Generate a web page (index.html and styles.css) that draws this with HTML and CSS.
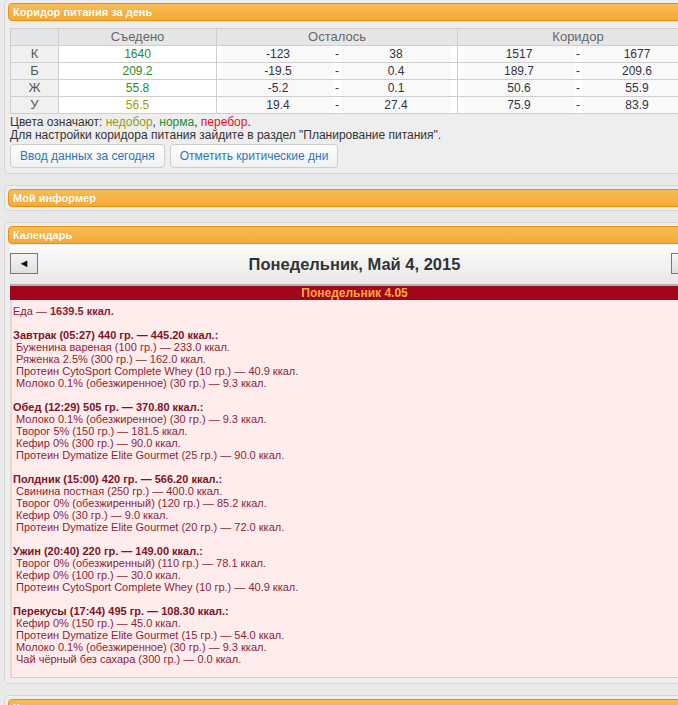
FILE: index.html
```html
<!DOCTYPE html>
<html lang="ru">
<head>
  <meta charset="UTF-8">
  <title>Дневник питания</title>
  <link rel="stylesheet" href="styles.css">
</head>
<body>
<div class="page">

  <div class="widget">
    <div class="widget-head">Коридор питания за день</div>
    <div class="widget-body">
      <table class="corridor">
        <tr>
          <th class="col-lbl"></th>
          <th class="col-eaten">Съедено</th>
          <th class="col-left">Осталось</th>
          <th>Коридор</th>
        </tr>
        <tr>
          <td class="lbl">К</td>
          <td class="norm">1640</td>
          <td><div class="range"><span>-123</span><i>-</i><span>38</span></div></td>
          <td><div class="range"><span>1517</span><i>-</i><span>1677</span></div></td>
        </tr>
        <tr>
          <td class="lbl">Б</td>
          <td class="norm">209.2</td>
          <td><div class="range"><span>-19.5</span><i>-</i><span>0.4</span></div></td>
          <td><div class="range"><span>189.7</span><i>-</i><span>209.6</span></div></td>
        </tr>
        <tr>
          <td class="lbl">Ж</td>
          <td class="norm">55.8</td>
          <td><div class="range"><span>-5.2</span><i>-</i><span>0.1</span></div></td>
          <td><div class="range"><span>50.6</span><i>-</i><span>55.9</span></div></td>
        </tr>
        <tr>
          <td class="lbl">У</td>
          <td class="under">56.5</td>
          <td><div class="range"><span>19.4</span><i>-</i><span>27.4</span></div></td>
          <td><div class="range"><span>75.9</span><i>-</i><span>83.9</span></div></td>
        </tr>
      </table>
      <p class="legend">Цвета означают: <span class="under">недобор</span>, <span class="norm">норма</span>, <span class="over">перебор</span>.<br>
      Для настройки коридора питания зайдите в раздел "Планирование питания".</p>
      <div class="actions">
        <button class="btn">Ввод данных за сегодня</button>
        <button class="btn">Отметить критические дни</button>
      </div>
    </div>
  </div>

  <div class="widget">
    <div class="widget-head">Мой информер</div>
  </div>

  <div class="widget">
    <div class="widget-head">Календарь</div>
    <div class="calendar">
      <div class="cal-nav">
        <button class="nav-btn">&#9668;</button>
        <div class="cal-title">Понедельник, Май 4, 2015</div>
        <button class="nav-btn"></button>
      </div>
      <div class="day-bar">Понедельник 4.05</div>
      <div class="day-log">
        <p>Еда — <b>1639.5 ккал.</b></p>

        <div class="meal">
          <p class="meal-title">Завтрак (05:27) 440 гр. — 445.20 ккал.:</p>
          <p class="item">Буженина вареная (100 гр.) — 233.0 ккал.</p>
          <p class="item">Ряженка 2.5% (300 гр.) — 162.0 ккал.</p>
          <p class="item">Протеин CytoSport Complete Whey (10 гр.) — 40.9 ккал.</p>
          <p class="item">Молоко 0.1% (обезжиренное) (30 гр.) — 9.3 ккал.</p>
        </div>

        <div class="meal">
          <p class="meal-title">Обед (12:29) 505 гр. — 370.80 ккал.:</p>
          <p class="item">Молоко 0.1% (обезжиренное) (30 гр.) — 9.3 ккал.</p>
          <p class="item">Творог 5% (150 гр.) — 181.5 ккал.</p>
          <p class="item">Кефир 0% (300 гр.) — 90.0 ккал.</p>
          <p class="item">Протеин Dymatize Elite Gourmet (25 гр.) — 90.0 ккал.</p>
        </div>

        <div class="meal">
          <p class="meal-title">Полдник (15:00) 420 гр. — 566.20 ккал.:</p>
          <p class="item">Свинина постная (250 гр.) — 400.0 ккал.</p>
          <p class="item">Творог 0% (обезжиренный) (120 гр.) — 85.2 ккал.</p>
          <p class="item">Кефир 0% (30 гр.) — 9.0 ккал.</p>
          <p class="item">Протеин Dymatize Elite Gourmet (20 гр.) — 72.0 ккал.</p>
        </div>

        <div class="meal">
          <p class="meal-title">Ужин (20:40) 220 гр. — 149.00 ккал.:</p>
          <p class="item">Творог 0% (обезжиренный) (110 гр.) — 78.1 ккал.</p>
          <p class="item">Кефир 0% (100 гр.) — 30.0 ккал.</p>
          <p class="item">Протеин CytoSport Complete Whey (10 гр.) — 40.9 ккал.</p>
        </div>

        <div class="meal">
          <p class="meal-title">Перекусы (17:44) 495 гр. — 108.30 ккал.:</p>
          <p class="item">Кефир 0% (150 гр.) — 45.0 ккал.</p>
          <p class="item">Протеин Dymatize Elite Gourmet (15 гр.) — 54.0 ккал.</p>
          <p class="item">Молоко 0.1% (обезжиренное) (30 гр.) — 9.3 ккал.</p>
          <p class="item">Чай чёрный без сахара (300 гр.) — 0.0 ккал.</p>
        </div>
      </div>
    </div>
  </div>

  <div class="widget">
    <div class="widget-head">Кнопки</div>
  </div>

</div>
</body>
</html>
```

FILE: styles.css
```css
html, body {
  margin: 0;
  overflow: hidden;
}
body {
  background: #e9e9e9;
  font-family: "Liberation Sans", Arial, sans-serif;
  font-size: 12px;
  color: #333;
}
.page {
  width: 701px;
  margin-top: -1px;
  padding-left: 4px;
}
.widget {
  background: #eeeeee;
  border: 1px solid #d6d6d6;
  border-radius: 5px;
  padding: 3px;
  margin-bottom: 11px;
}
.widget-head {
  height: 16px;
  line-height: 16px;
  padding: 0 4px;
  border: 1px solid #e8920f;
  border-radius: 4px;
  background: linear-gradient(#f9bc57, #f5aa36);
  color: #fff;
  font-weight: bold;
  font-size: 11px;
  text-shadow: 0 0 1px #e09a20;
}
.widget-body {
  padding: 7px 2px 2px;
}

/* corridor table */
.corridor {
  width: 689px;
  border-collapse: collapse;
  background: #fff;
  font-size: 12px;
}
.corridor th,
.corridor td {
  border: 1px solid #cfcfcf;
  height: 16px;
  line-height: 16px;
  padding: 0;
  text-align: center;
}
.corridor th {
  background: #e6e6e6;
  color: #666;
  font-weight: normal;
  font-size: 13px;
}
.col-lbl { width: 47px; }
.col-eaten { width: 157px; }
.col-left { width: 240px; }
.corridor .lbl {
  background: #f0f0f0;
  color: #555;
  font-size: 13px;
}
.corridor td {
  color: #334;
}
.range {
  display: flex;
  justify-content: center;
}
.range span {
  width: 110px;
  background: #f9f9f9;
}
.range i {
  font-style: normal;
  width: 8px;
}
.corridor .norm, .legend .norm { color: #2c8a1c; }
.corridor .under, .legend .under { color: #9c9a12; }
.legend .over { color: #e0142c; }

.legend {
  margin: 2px 0 0;
  line-height: 13px;
  color: #333;
}
.actions {
  display: flex;
  gap: 5px;
  margin-top: 2px;
}
.btn {
  height: 24px;
  padding: 0 9px;
  border: 1px solid #cdcdcd;
  border-radius: 4px;
  background: linear-gradient(#ffffff, #f0f0f0);
  color: #2d78b8;
  font-family: "Liberation Sans", Arial, sans-serif;
  font-size: 12px;
}

/* calendar */
.calendar {
  padding: 0 2px 2px;
}
.cal-nav {
  display: flex;
  align-items: center;
  justify-content: space-between;
  height: 39px;
  margin-top: 1px;
  border-bottom: 2px solid #b3b3b3;
  background: linear-gradient(#fbfbfb, #e8e8e8);
}
.nav-btn {
  width: 28px;
  height: 21px;
  padding: 0;
  margin-bottom: 3px;
  border: 1px solid #777;
  background: linear-gradient(#f4f4f4, #e0e0e0);
  color: #111;
  font-size: 11px;
  line-height: 19px;
}
.cal-title {
  font-size: 16.5px;
  font-weight: bold;
  color: #333;
}
.day-bar {
  height: 14px;
  line-height: 14px;
  background: #a0071a;
  color: #ffa83c;
  font-weight: bold;
  text-align: center;
  font-size: 12px;
}
.day-log {
  border-top: 2px solid #ececec;
  border-left: 2px solid #e4d8d8;
  border-bottom: 1px solid #d4c8c8;
  background: #ffeded;
  color: #8e1e34;
  font-size: 11px;
  line-height: 12px;
  padding: 3px 1px 12px;
  height: 360px;
}
.day-log p {
  margin: 0;
}
.meal {
  margin-top: 12px;
}
.meal-title {
  font-weight: bold;
  color: #7e1426;
}
.item {
  padding-left: 3px;
}
```
